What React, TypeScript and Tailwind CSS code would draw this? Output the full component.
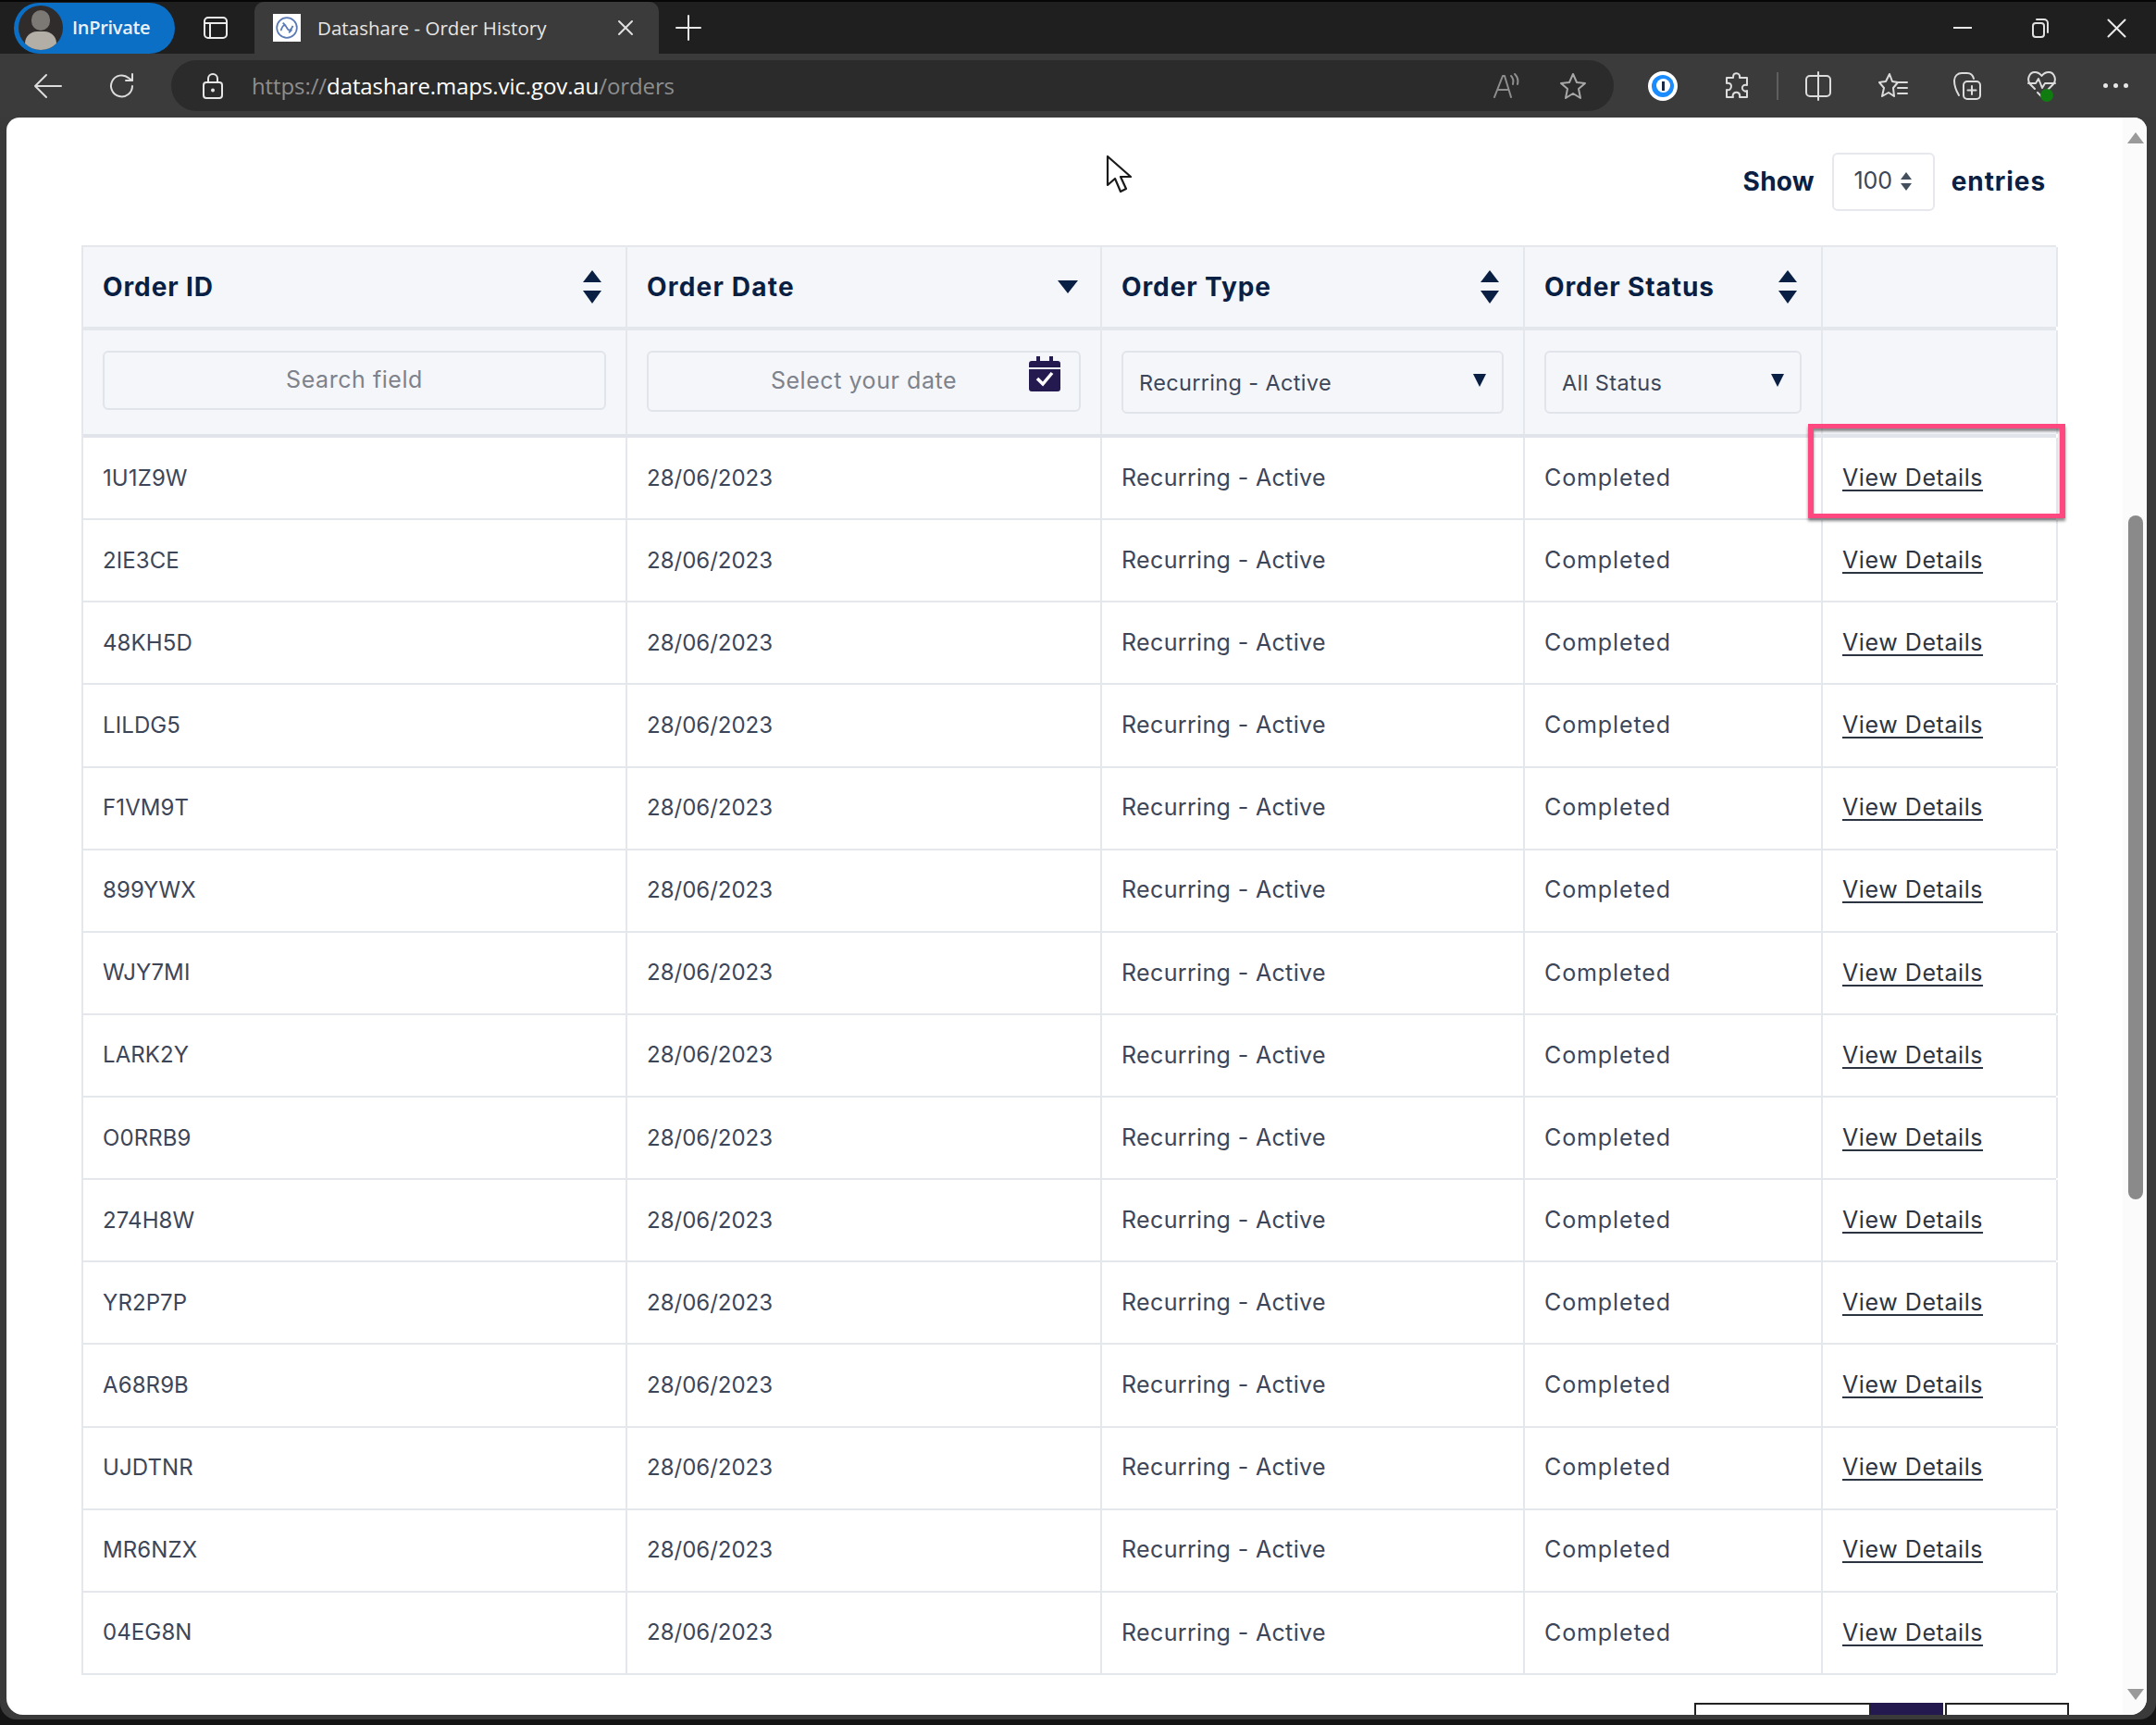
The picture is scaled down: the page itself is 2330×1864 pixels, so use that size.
import React from "react";

const ids = ["1U1Z9W","2IE3CE","48KH5D","LILDG5","F1VM9T","899YWX","WJY7MI","LARK2Y","O0RRB9","274H8W","YR2P7P","A68R9B","UJDTNR","MR6NZX","04EG8N"];
const cols = "grid grid-cols-[588px_513px_457px_322px_254px]";
const cell = "border-r-2 border-[#e4e7ec] px-[21px] flex items-center";
const rowCell = "border-r-2 border-[#e4e7ec] pl-[21px] flex items-center";

function Sort({ only }: { only?: boolean }) {
  if (only) return (
    <svg width="24" height="16" viewBox="0 0 24 16" className="shrink-0 mr-[2px]"><path d="M1 1h22L12 15z" fill="#0a1f44"/></svg>
  );
  return (
    <svg width="22" height="38" viewBox="0 0 22 38" className="shrink-0 mr-[4px]">
      <path d="M11 1 21 14H1z" fill="#0a1f44"/><path d="M1 23h20L11 37z" fill="#0a1f44"/>
    </svg>
  );
}

function Caret() {
  return <svg width="16" height="16" viewBox="0 0 16 16" className="shrink-0"><path d="M1 1h14L8 15z" fill="#0a1f44"/></svg>;
}

function I({ w = 32, h = 32, vb = "0 0 32 32", className = "", children }: { w?: number; h?: number; vb?: string; className?: string; children: React.ReactNode }) {
  return <svg width={w} height={h} viewBox={vb} fill="none" stroke="currentColor" strokeWidth="2" strokeLinecap="round" strokeLinejoin="round" className={"shrink-0 " + className}>{children}</svg>;
}

function Chrome() {
  return (
    <>
      <div className="h-[58px] bg-[#1f1f1f] border-t-2 border-[#060606] flex items-center shrink-0 text-white font-['Open_Sans',sans-serif]">
        <div className="ml-[15px] h-[55px] w-[174px] rounded-full bg-[#0b6fc6] flex items-center">
          <div className="ml-[5px] w-[48px] h-[48px] rounded-full bg-[#2f2c2b] relative overflow-hidden shrink-0">
            <div className="absolute left-[14px] top-[5px] w-[20px] h-[22px] rounded-full bg-[#7c7873]"/>
            <div className="absolute left-[7px] top-[28px] w-[34px] h-[26px] rounded-full bg-[#b3aea6]"/>
          </div>
          <span className="ml-[10px] text-[20px] font-semibold tracking-[-0.3px] text-[#e8f2fb]">InPrivate</span>
        </div>
        <I w={28} h={28} vb="0 0 28 28" className="ml-[30px] text-[#ececec]">
          <rect x="2" y="3" width="24" height="22" rx="4"/><path d="M2 9h24M8 9v16" />
        </I>
        <div className="ml-[28px] w-[437px] h-[56px] self-end bg-[#3b3b3b] rounded-t-[10px] flex items-center">
          <div className="ml-[20px] w-[30px] h-[30px] bg-white flex items-center justify-center shrink-0">
            <svg width="26" height="26" viewBox="0 0 24 24" fill="none" stroke="#5a79b5" strokeWidth="1.6"><circle cx="12" cy="12" r="10"/><path d="M6 15c2-6 4-7 6-3s4 3 6-2M8 7l3 3M14 17l3-3"/></svg>
          </div>
          <span className="ml-[18px] text-[20.5px] tracking-[0.05px] text-[#e6e6e6] whitespace-nowrap">Datashare - Order History</span>
          <I w={18} h={18} vb="0 0 18 18" className="ml-[76px] text-[#e0e0e0]"><path d="M2 2l14 14M16 2 2 16"/></I>
        </div>
        <I w={28} h={28} vb="0 0 28 28" className="ml-[18px] text-[#e8e8e8]"><path d="M14 1v26M1 14h26"/></I>
        <div className="ml-auto flex items-center">
          <div className="w-[20px] h-[2px] bg-[#e8e8e8]"/>
          <I w={20} h={22} vb="0 0 20 22" className="ml-[64px] text-[#e0e0e0]"><rect x="2" y="6" width="12" height="15" rx="3"/><path d="M6 2h8a4 4 0 0 1 4 4v10"/></I>
          <I w={21} h={21} vb="0 0 21 21" className="ml-[62px] mr-[32px] text-[#e8e8e8]"><path d="M1.5 1.5l18 18M19.5 1.5l-18 18"/></I>
        </div>
      </div>
      <div className="h-[69px] bg-[#3b3b3b] flex items-center shrink-0 text-[#dcdcdc]">
        <I w={32} h={28} vb="0 0 32 28" className="ml-[36px]"><path d="M30 14H2M14 2 2 14l12 12"/></I>
        <I w={32} h={32} className="ml-[48px]"><path d="M27 16a11.5 11.5 0 1 1-4-8.8L27 10V3"/><path d="M27 10h-7"/></I>
        <div className="ml-[37px] w-[1559px] h-[55px] rounded-full bg-[#2b2b2b] flex items-center">
          <I w={24} h={30} vb="0 0 24 30" className="ml-[33px] text-[#e6e6e6]"><rect x="2" y="11" width="20" height="17" rx="3"/><path d="M7 11V7a5 5 0 0 1 10 0v4"/><circle cx="12" cy="19.5" r="1" fill="currentColor"/></I>
          <span className="ml-[30px] text-[24px] tracking-[-0.1px] font-['Open_Sans',sans-serif] text-[#8e8e8e] whitespace-nowrap">https://<span className="text-white font-medium">datashare.maps.vic.gov.au</span>/orders</span>
          <I w={30} h={30} className="ml-auto text-[#8e8e8e]" vb="0 0 30 30"><path d="M2 27 11 4h2l7 23M6 19h11M20 4c2 2 3 5 2 9M24 2c3 3 4 7 3 11"/></I>
          <I w={32} h={32} className="ml-[41px] mr-[28px] text-[#a8a8a8]"><path d="m16 3 4 9 9 1-7 6 2 10-8-5-8 5 2-10-7-6 9-1z"/></I>
        </div>
        <div className="ml-[37px] w-[32px] h-[32px] rounded-full bg-white flex items-center justify-center shrink-0">
          <div className="w-[24px] h-[24px] rounded-full bg-[#1a8cff] flex items-center justify-center">
            <div className="w-[15px] h-[15px] rounded-full bg-white flex items-center justify-center"><div className="w-[3px] h-[10px] bg-[#1a2b4a]"/></div>
          </div>
        </div>
        <I w={30} h={32} vb="0 0 30 32" className="ml-[49px]"><path d="M11 3c3-2 7 0 6 4h8v8c-4-1-6 2-5 4 1 3 4 3 5 2v7h-8c1-4-2-6-5-5-2 1-3 3-2 5H3v-8c3 1 5-1 5-4 0-2-2-4-5-3V7h7c0-2 0-3 1-4z" transform="translate(1 0)"/></I>
        <div className="ml-[28px] w-[2px] h-[30px] bg-[#5e5e5e]"/>
        <I w={30} h={32} vb="0 0 30 32" className="ml-[28px]"><rect x="2" y="5" width="26" height="22" rx="4"/><path d="M15 1v30" /></I>
        <I w={34} h={32} vb="0 0 34 32" className="ml-[49px]"><path d="m13 3 3 8 6 1-5 6 1 9-6-4-7 4 2-9-5-6 7-1zM23 12h9M22 18h10M22 24h10"/></I>
        <I w={34} h={34} vb="0 0 34 34" className="ml-[46px]"><path d="M8 27c-3-5-5-11-5-16 0-5 4-8 8-8h6c4 0 6 2 7 6"/><rect x="13" y="12" width="18" height="19" rx="4"/><path d="M22 17v9M17.5 21.5h9"/></I>
        <div className="ml-[47px] relative w-[33px] h-[34px] shrink-0">
          <I w={33} h={30} vb="0 0 33 30"><path d="M9 20 4 15C0 10 3 2 9 2c3 0 6 2 7.500 4C18 4 21 2 24 2c6 0 9 8 5 13l-13 13-4-4M2 14h8l3-5 4 10 3-5h11"/></I>
          <div className="absolute right-[4px] bottom-0 w-[14px] h-[14px] rounded-full bg-[#107c10]"/>
        </div>
        <div className="ml-[50px] flex gap-[6px]">
          <div className="w-[5px] h-[5px] rounded-full bg-[#e8e8e8]"/><div className="w-[5px] h-[5px] rounded-full bg-[#e8e8e8]"/><div className="w-[5px] h-[5px] rounded-full bg-[#e8e8e8]"/>
        </div>
      </div>
    </>
  );
}

export default function App() {
  const navy = "text-[#0a1f44]";
  return (
    <div className="w-[2330px] h-[1864px] bg-[#141414] flex flex-col overflow-hidden font-['Inter',sans-serif] relative">
      <Chrome />
      <div className="flex-1 min-h-0 bg-[#3a3a3a] px-[7px] pb-[5px] mb-[6px] rounded-b-[18px] pr-[10px]">
        <div className="h-full rounded-t-[14px] rounded-b-[18px] bg-white overflow-hidden flex relative">
          <div className="flex-1 min-w-0 pl-[81px]">
            <div className={`h-[138px] flex items-center pr-[83px] justify-end ${navy} text-[28px] font-bold tracking-[0.9px]`}>
              <span className="tracking-[0.2px]">Show</span>
              <div className="ml-[19px] mr-[18px] w-[111px] h-[63px] border-2 border-[#e6e8ee] rounded-[6px] flex items-center justify-center gap-[8px] font-normal text-[25px] tracking-[0px] text-[#3c4658]">
                100
                <svg width="14" height="22" viewBox="0 0 14 22"><path d="M7 1l6 8H1zM1 13h12l-6 8z" fill="#45505f"/></svg>
              </div>
              <span>entries</span>
            </div>
            <div className="w-[2134px] border-l-2 border-[#e4e7ec]">
              <div className={`${cols} h-[92px] bg-[#f5f6f9] border-t-2 border-[#e4e7ec] border-b-4 ${navy} text-[28px] font-bold tracking-[0.9px]`}>
                <div className={`${cell} justify-between`}><span>Order ID</span><Sort /></div>
                <div className={`${cell} justify-between`}><span className="tracking-[1.2px]">Order Date</span><Sort only /></div>
                <div className={`${cell} justify-between`}><span>Order Type</span><Sort /></div>
                <div className={`${cell} justify-between`}><span>Order Status</span><Sort /></div>
                <div className={cell}/>
              </div>
              <div className={`${cols} h-[116px] bg-[#f5f6f9] border-b-4 border-[#e1e4ea]`}>
                <div className={`${cell} items-start pt-[22px]`}>
                  <div className="w-full h-[64px] border-2 border-[#e1e4ea] rounded-[6px] flex items-center justify-center text-[25px] tracking-[0.55px] text-[#7d828c]">Search field</div>
                </div>
                <div className={`${cell} items-start pt-[22px]`}>
                  <div className="relative w-full h-[66px] border-2 border-[#e1e4ea] rounded-[6px] flex items-center justify-center text-[25px] tracking-[0.55px] text-[#7d828c]">
                    <span>Select your date</span>
                    <svg width="34" height="38" viewBox="0 0 34 38" className="absolute right-[20px] top-[4px]">
                      <path d="M8 0h4v5h10V0h4v5h5a3 3 0 0 1 3 3v27a3 3 0 0 1-3 3H3a3 3 0 0 1-3-3V8a3 3 0 0 1 3-3h5z" fill="#241a50"/>
                      <rect x="0" y="12" width="34" height="2" fill="#f5f6f9"/>
                      <path d="m9 24 6 6 10-12" stroke="#fff" strokeWidth="3.500" fill="none"/>
                    </svg>
                  </div>
                </div>
                <div className={`${cell} items-start pt-[22px]`}>
                  <div className="w-full h-[68px] border-2 border-[#e1e4ea] rounded-[6px] flex items-center justify-between pl-[17px] pr-[16px] text-[23.5px] tracking-[0.35px] text-[#3c4658]">
                    <span className="mt-[2px]">Recurring - Active</span><span className="-mt-[4px]"><Caret /></span>
                  </div>
                </div>
                <div className={`${cell} items-start pt-[22px]`}>
                  <div className="w-full h-[68px] border-2 border-[#e1e4ea] rounded-[6px] flex items-center justify-between pl-[17px] pr-[16px] text-[23.5px] tracking-[0.4px] text-[#3c4658]">
                    <span className="mt-[2px]">All Status</span><span className="-mt-[4px]"><Caret /></span>
                  </div>
                </div>
                <div className={cell}/>
              </div>
              {ids.map((id) => (
                <div key={id} className={`${cols} h-[89.13px] border-b-2 border-[#e4e7ec] text-[#3c4658]`}>
                  <div className={`${rowCell} text-[24px] tracking-[0.1px]`}>{id}</div>
                  <div className={`${rowCell} text-[24px]`}>28/06/2023</div>
                  <div className={`${rowCell} text-[25px] tracking-[0.35px]`}>Recurring - Active</div>
                  <div className={`${rowCell} text-[25px] tracking-[0.9px]`}>Completed</div>
                  <div className={`${rowCell} text-[25px] tracking-[0.57px]`}><a className="underline underline-offset-[4px] decoration-2 text-[#2c3442]">View Details</a></div>
                </div>
              ))}
            </div>
            <div className="mt-[30px] ml-[1743px] flex h-[20px] w-[405px]">
              <div className="w-[191px] border-2 border-[#222]"/>
              <div className="w-[78px] bg-[#241a50]"/>
              <div className="ml-[2px] w-[134px] border-2 border-[#222]"/>
            </div>
          </div>
          <div className="w-[26px] bg-[#fbfbfb] shrink-0 flex flex-col items-center py-[16px] pl-[2px]">
            <div className="w-0 h-0 border-x-[9px] border-x-transparent border-b-[12px] border-b-[#9a9a9a]"/>
            <div className="mt-[402px] w-[16px] h-[739px] rounded-full bg-[#8a8a8a]"/>
            <div className="mt-auto w-0 h-0 border-x-[9px] border-x-transparent border-t-[12px] border-t-[#9a9a9a]"/>
          </div>
        </div>
      </div>
      <div className="absolute left-[1954px] top-[458px] w-[278px] h-[102px] border-x-[6px] border-y-[5px] border-[#ff4880] shadow-[0_3px_3px_rgba(0,0,0,0.45),inset_0_3px_3px_rgba(0,0,0,0.45)]"/>
      <svg width="28" height="42" viewBox="0 0 28 42" className="absolute left-[1195px] top-[167px]">
        <path d="M2 2v31l8-7 6 14 6-3-6-13h11z" fill="#fff" stroke="#1a1a1a" strokeWidth="2.200" strokeLinejoin="round"/>
      </svg>
    </div>
  );
}
